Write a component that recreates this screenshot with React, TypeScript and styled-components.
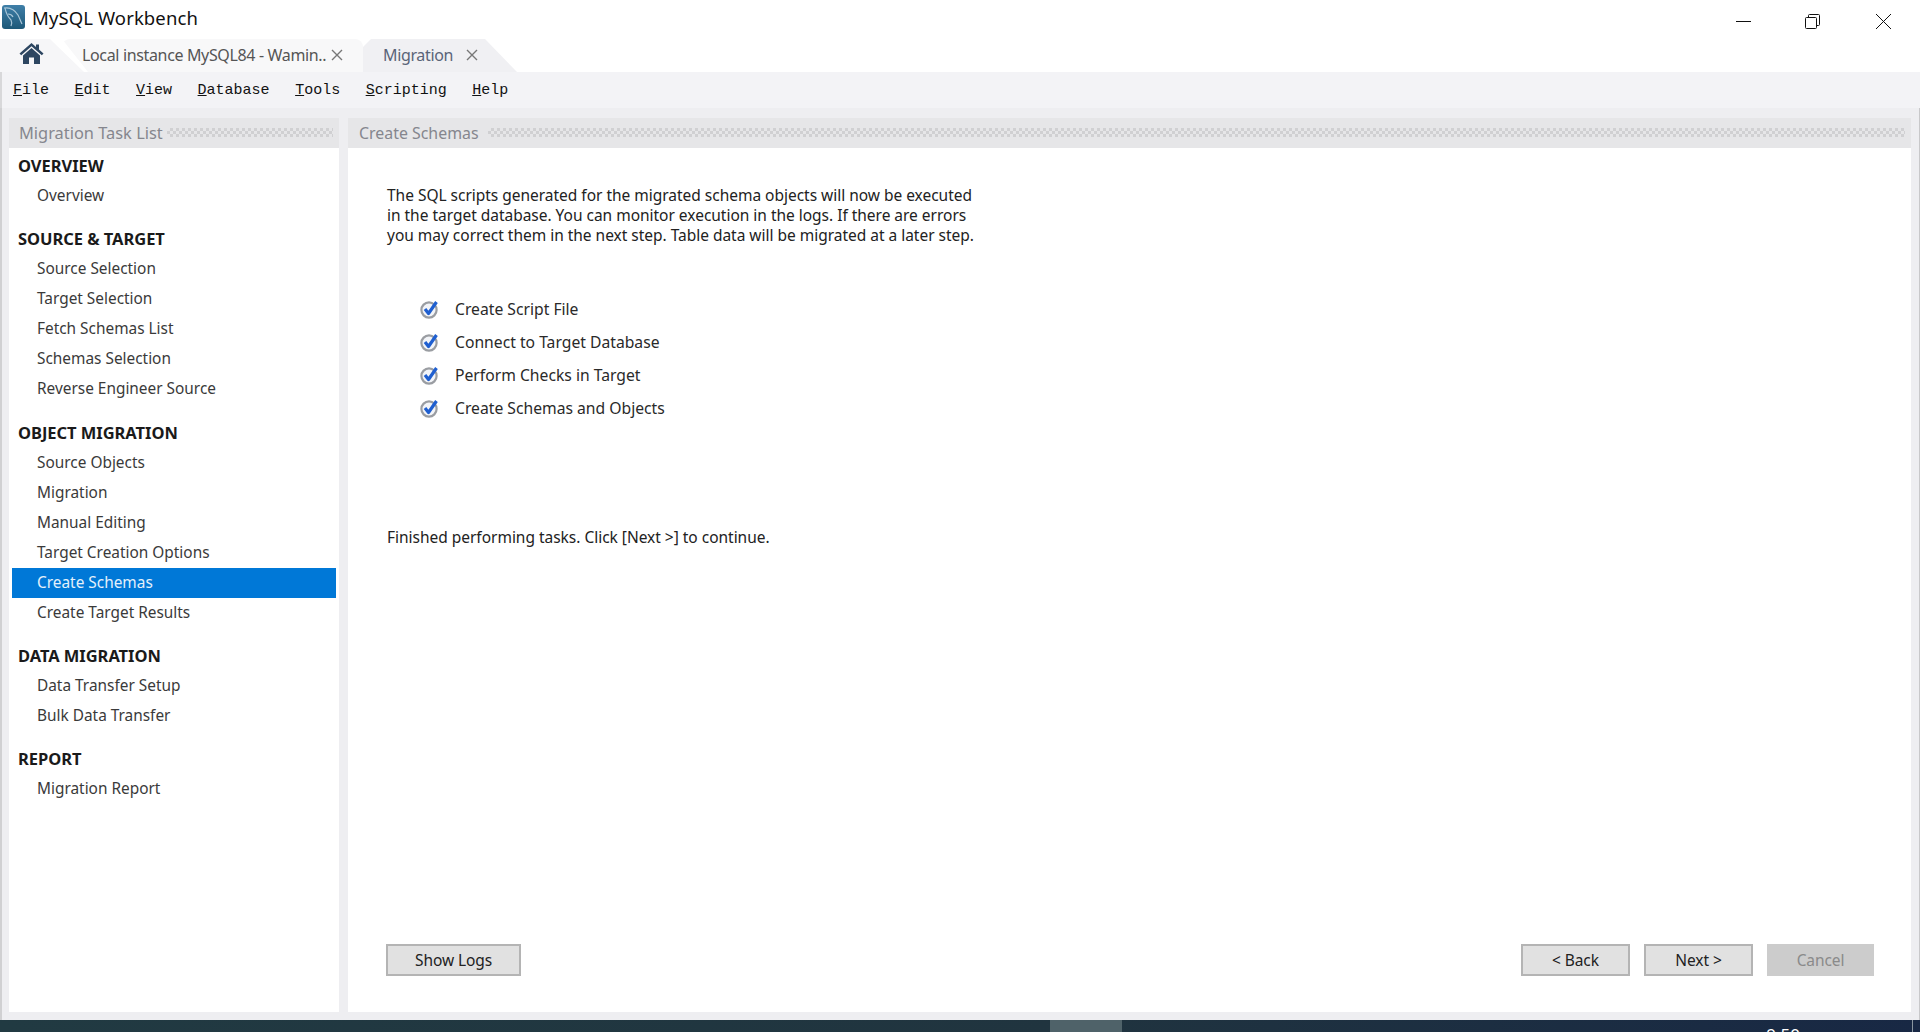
import React from 'react';
import styled, { createGlobalStyle } from 'styled-components';

const Global = createGlobalStyle`
  html, body { margin: 0; padding: 0; height: 100%; overflow: hidden; background: #fff; }
  #root { height: 100%; }
  * { box-sizing: border-box; }
`;

const UI = `"Noto Sans", "Open Sans", "Liberation Sans", sans-serif`;

const Page = styled.div`
  width: 1920px;
  height: 1032px;
  display: flex;
  flex-direction: column;
  font-family: ${UI};
  color: #333;
  overflow: hidden;
`;

const TitleBar = styled.div`
  height: 39px;
  flex: none;
  display: flex;
  align-items: center;
  background: #fff;
  padding: 0 29px 5px 2px;
`;
const AppName = styled.span`
  margin-left: 7px;
  font-size: 18.5px;
  color: #111;
  letter-spacing: 0.1px;
`;
const WindowControls = styled.div`
  margin-left: auto;
  display: flex;
  align-items: center;
  gap: 54px;
  padding-top: 9px;
`;
const CloseSlot = styled.span`
  display: flex;
  margin-left: 2px;
`;

const TabStrip = styled.div`
  height: 33px;
  flex: none;
  display: flex;
  align-items: stretch;
  background: #fff;
`;
const HomeTab = styled.div`
  width: 84px;
  background: #f6f6f8;
  padding: 3px 0 0 19px;
  clip-path: polygon(0 0, 50px 0, 84px 100%, 0 100%);
`;
const DocTab = styled.div<{ $w: number; $active?: boolean; $overlap?: number }>`
  width: ${p => p.$w}px;
  margin-left: ${p => -(p.$overlap ?? 0)}px;
  display: flex;
  align-items: center;
  padding-bottom: 1px;
  background: ${p => (p.$active ? '#f0f0f3' : '#f8f8f9')};
  border-radius: 8px 8px 0 0;
  clip-path: ${p =>
    p.$active
      ? 'polygon(0 100%, 0 8px, 8px 0, 122px 0, 100% 100%)'
      : 'polygon(26px 100%, 0 0, 100% 0, 100% 100%)'};
`;
const TabLabel = styled.span<{ $left: number; $w: number; $active?: boolean }>`
  margin-left: ${p => p.$left}px;
  width: ${p => p.$w}px;
  font-size: 16px;
  letter-spacing: -0.35px;
  white-space: nowrap;
  color: ${p => (p.$active ? '#5a6478' : '#555')};
`;

const MenuBar = styled.div`
  height: 36px;
  flex: none;
  display: flex;
  align-items: center;
  gap: 25.5px;
  padding: 1px 0 0 11px;
  background: #f3f3f6;
  border-left: 2px solid #d8d8da;
`;
const MenuItem = styled.span`
  font-family: "Liberation Mono", monospace;
  font-size: 15px;
  color: #111;
  &::first-letter { text-decoration: underline; }
`;

const Workspace = styled.div`
  flex: 1;
  min-height: 0;
  display: flex;
  gap: 9px;
  padding: 10px 8px 8px 7px;
  background: #eeeef1;
  border-left: 2px solid #d0d0d2;
  border-right: 1px solid #c8c8ca;
`;
const Panel = styled.section<{ $w?: number }>`
  display: flex;
  flex-direction: column;
  flex: ${p => (p.$w ? `0 0 ${p.$w}px` : '1')};
  min-width: 0;
`;
const PanelHeader = styled.header<{ $gap: number; $pad: number; $size: number }>`
  height: 30px;
  flex: none;
  display: flex;
  align-items: center;
  gap: ${p => p.$gap}px;
  padding: 0 6px 1px ${p => p.$pad}px;
  background: #e6e6e8;
  font-size: ${p => p.$size}px;
  color: #85868e;
  white-space: nowrap;
`;
const Hatch = styled.i`
  flex: 1;
  height: 9px;
  background: repeating-conic-gradient(#d0d0d2 0 25%, transparent 0 50%) 0 0 / 6px 6px;
`;

const TaskList = styled.nav`
  flex: 1;
  background: #fff;
  padding: 3px 3px 0;
`;
const Group = styled.div`
  margin-bottom: 13.3px;
`;
const GroupTitle = styled.div`
  height: 30px;
  line-height: 29px;
  padding-left: 6px;
  font-size: 16.5px;
  font-weight: 700;
  color: #1a1a1a;
  letter-spacing: -0.05px;
  white-space: nowrap;
`;
const Task = styled.div<{ $selected?: boolean }>`
  height: 30px;
  line-height: 29px;
  padding-left: 25px;
  font-size: 15.4px;
  color: ${p => (p.$selected ? '#e4f0fb' : '#3a3a3a')};
  background: ${p => (p.$selected ? '#0078d7' : 'transparent')};
`;

const MainBody = styled.main`
  flex: 1;
  display: flex;
  flex-direction: column;
  background: #fff;
  padding: 37px 37px 36px 39px;
`;
const Lead = styled.p`
  margin: 0;
  font-size: 15.5px;
  line-height: 20px;
  color: #222;
  letter-spacing: -0.02px;
  white-space: nowrap;
`;
const Checklist = styled.ul`
  list-style: none;
  margin: 47px 0 0;
  padding: 0 0 0 33px;
`;
const CheckRow = styled.li`
  height: 33px;
  display: flex;
  align-items: center;
  gap: 15px;
  font-size: 15.7px;
  color: #2a2a2a;
`;
const Status = styled(Lead)`
  margin-top: 103px;
`;
const ButtonRow = styled.div`
  margin-top: auto;
  display: flex;
  gap: 14px;
  margin-left: -1px;
`;
const Button = styled.button<{ $w: number; $disabled?: boolean }>`
  width: ${p => p.$w}px;
  height: 32px;
  padding: 0 0 1px;
  font-family: ${UI};
  font-size: 15.5px;
  letter-spacing: -0.1px;
  color: ${p => (p.$disabled ? '#8a8a8a' : '#222')};
  background: ${p => (p.$disabled ? '#cccccc' : '#e1e1e1')};
  border: 2px solid ${p => (p.$disabled ? '#cccccc' : '#b4b4b4')};
`;
const Spacer = styled.div`
  flex: 1;
`;

const TaskBar = styled.footer`
  height: 12px;
  flex: none;
  display: flex;
  padding: 0 7px 0 1050px;
  overflow: hidden;
  background: linear-gradient(90deg, #213a42 0%, #20343f 55%, #182844 100%);
`;
const TaskButton = styled.div`
  width: 72px;
  background: #4f6269;
`;
const Clock = styled.span`
  margin-left: auto;
  margin-right: 112px;
  font-size: 17px;
  line-height: 18px;
  padding-top: 6px;
  color: #fff;
  white-space: nowrap;
`;
const TrayEdge = styled.div`
  width: 1px;
  background: #8a96a0;
`;

const Logo = () => (
  <svg width="23" height="24" viewBox="0 0 23 24">
    <defs>
      <linearGradient id="lg" x1="0" y1="0" x2="0" y2="1">
        <stop offset="0" stopColor="#3f7fa8" />
        <stop offset="1" stopColor="#1d5878" />
      </linearGradient>
    </defs>
    <rect width="23" height="24" rx="3" fill="url(#lg)" />
    <path d="M2 3c6-1 11 2 14 7 1.5 3 2.5 6 4 9M3 3c1 5 3 9 6 12 1 2 1 4 0 6M6 9c2 0 4 1 5 3" stroke="#a9c6d8" strokeWidth="1.2" fill="none" />
  </svg>
);
const Home = () => (
  <svg width="25" height="23" viewBox="0 0 25 23">
    <path d="M12.5 1 0.5 11.5 2.2 13.2 12.5 4.2 22.8 13.2 24.5 11.5 20 7.5V2.5H17V4.9Z" fill="#2d4661" />
    <path d="M12.5 6 4 13.4V22H10V15.5H15V22H21V13.4Z" fill="#2d4661" />
  </svg>
);
const TabClose = () => (
  <svg width="12" height="12" viewBox="0 0 12 12" style={{ flex: 'none' }}>
    <path d="M1 1 11 11M11 1 1 11" stroke="#777" strokeWidth="1.4" />
  </svg>
);
const Minimize = () => (
  <svg width="15" height="15" viewBox="0 0 15 15"><path d="M0 7.5H15" stroke="#111" /></svg>
);
const Restore = () => (
  <svg width="15" height="15" viewBox="0 0 15 15" fill="none" stroke="#111">
    <rect x="0.5" y="3.5" width="11" height="11" rx="1" />
    <path d="M3.5 3.5V1.5a1 1 0 0 1 1-1H13.5a1 1 0 0 1 1 1V10.500a1 1 0 0 1-1 1H11.500" />
  </svg>
);
const CloseWin = () => (
  <svg width="15" height="15" viewBox="0 0 15 15"><path d="M0 0 15 15M15 0 0 15" stroke="#111" /></svg>
);
const Check = () => (
  <svg width="20" height="20" viewBox="0 0 20 20" style={{ flex: 'none' }}>
    <circle cx="9" cy="11" r="7.6" fill="#f2f4f8" stroke="#9a9da2" strokeWidth="2.2" />
    <path d="M5 10 8.500 14.500 16.500 3" fill="none" stroke="#1f5fd0" strokeWidth="3.2" strokeLinejoin="round" />
  </svg>
);

const groups: { title: string; items: string[] }[] = [
  { title: 'OVERVIEW', items: ['Overview'] },
  { title: 'SOURCE & TARGET', items: ['Source Selection', 'Target Selection', 'Fetch Schemas List', 'Schemas Selection', 'Reverse Engineer Source'] },
  { title: 'OBJECT MIGRATION', items: ['Source Objects', 'Migration', 'Manual Editing', 'Target Creation Options', 'Create Schemas', 'Create Target Results'] },
  { title: 'DATA MIGRATION', items: ['Data Transfer Setup', 'Bulk Data Transfer'] },
  { title: 'REPORT', items: ['Migration Report'] },
];
const menus = ['File', 'Edit', 'View', 'Database', 'Tools', 'Scripting', 'Help'];
const checks = ['Create Script File', 'Connect to Target Database', 'Perform Checks in Target', 'Create Schemas and Objects'];

export default function App() {
  return (
    <Page>
      <Global />
      <TitleBar>
        <Logo />
        <AppName>MySQL Workbench</AppName>
        <WindowControls>
          <Minimize />
          <Restore />
          <CloseSlot><CloseWin /></CloseSlot>
        </WindowControls>
      </TitleBar>
      <TabStrip>
        <HomeTab><Home /></HomeTab>
        <DocTab $w={301} $overlap={22}>
          <TabLabel $left={20} $w={249}>Local instance MySQL84 - Wamin..</TabLabel>
          <TabClose />
        </DocTab>
        <DocTab $w={154} $active>
          <TabLabel $left={20} $w={83} $active>Migration</TabLabel>
          <TabClose />
        </DocTab>
      </TabStrip>
      <MenuBar>
        {menus.map(m => <MenuItem key={m}>{m}</MenuItem>)}
      </MenuBar>
      <Workspace>
        <Panel $w={330}>
          <PanelHeader $gap={4} $pad={10} $size={16.4}>Migration Task List<Hatch /></PanelHeader>
          <TaskList>
            {groups.map(g => (
              <Group key={g.title}>
                <GroupTitle>{g.title}</GroupTitle>
                {g.items.map(i => <Task key={i} $selected={i === 'Create Schemas'}>{i}</Task>)}
              </Group>
            ))}
          </TaskList>
        </Panel>
        <Panel>
          <PanelHeader $gap={9} $pad={11} $size={15.9}>Create Schemas<Hatch /></PanelHeader>
          <MainBody>
            <Lead>
              The SQL scripts generated for the migrated schema objects will now be executed<br />
              in the target database. You can monitor execution in the logs. If there are errors<br />
              you may correct them in the next step. Table data will be migrated at a later step.
            </Lead>
            <Checklist>
              {checks.map(c => <CheckRow key={c}><Check />{c}</CheckRow>)}
            </Checklist>
            <Status>Finished performing tasks. Click [Next &gt;] to continue.</Status>
            <ButtonRow>
              <Button $w={135}>Show Logs</Button>
              <Spacer />
              <Button $w={109}>&lt; Back</Button>
              <Button $w={109}>Next &gt;</Button>
              <Button $w={107} $disabled>Cancel</Button>
            </ButtonRow>
          </MainBody>
        </Panel>
      </Workspace>
      <TaskBar>
        <TaskButton />
        <Clock>9:50</Clock>
        <TrayEdge />
      </TaskBar>
    </Page>
  );
}
